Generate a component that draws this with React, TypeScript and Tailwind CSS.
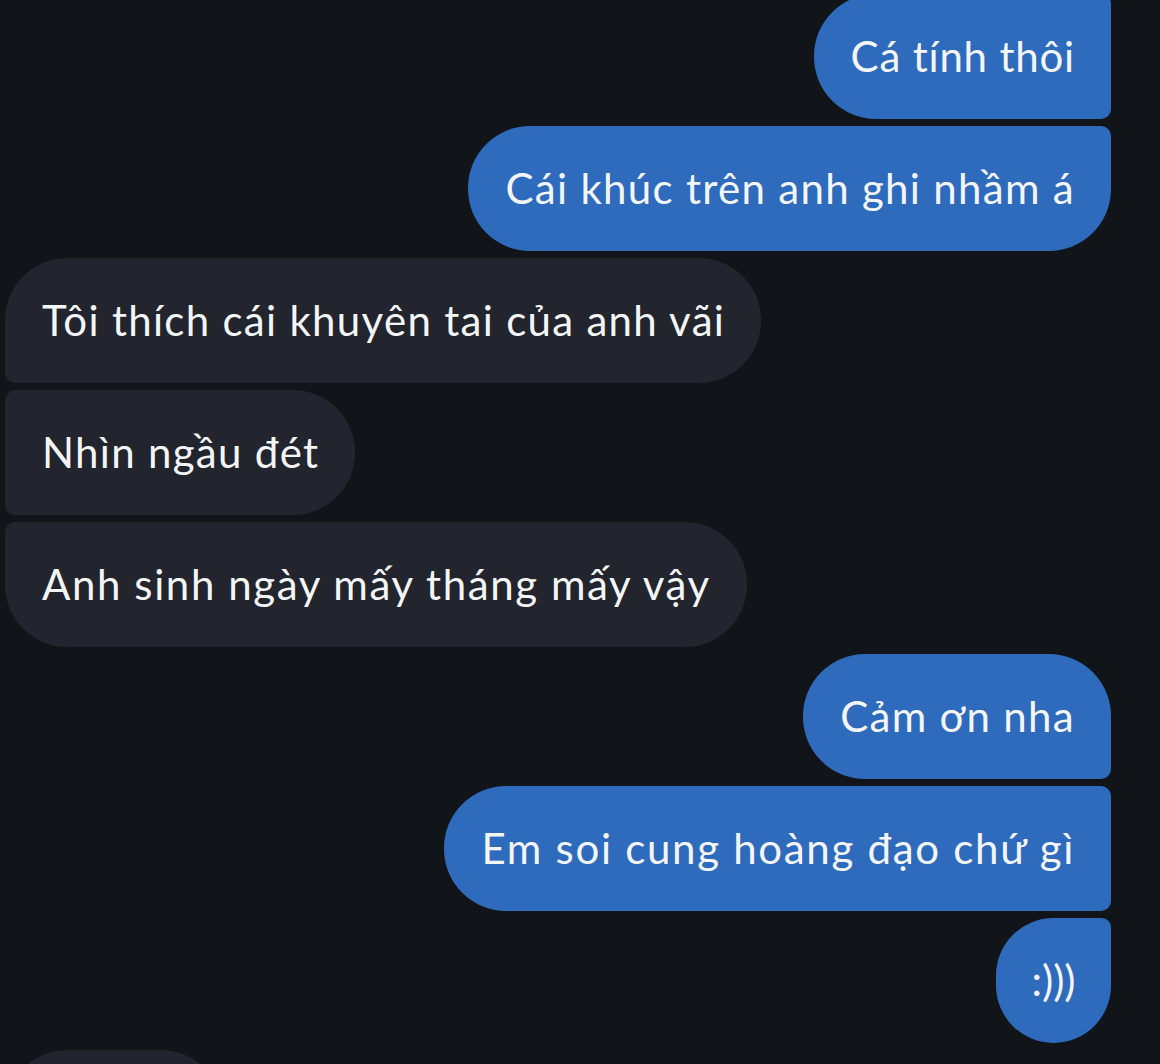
type Msg = {
    text: string;
    mine: boolean;
    shape: string;
    extra?: string;
};

// shape classes: big radius is 62px, small one is 10px
const messages: Msg[] = [
    { text: "Cá tính thôi", mine: true, shape: "rounded-l-[62px] rounded-r-[10px]", extra: "tracking-[0.8px]" },
    { text: "Cái khúc trên anh ghi nhầm á", mine: true, shape: "rounded-l-[62px] rounded-tr-[10px] rounded-br-[62px]" },
    { text: "Tôi thích cái khuyên tai của anh vãi", mine: false, shape: "rounded-tl-[62px] rounded-bl-[10px] rounded-r-[62px]" },
    { text: "Nhìn ngầu đét", mine: false, shape: "rounded-l-[10px] rounded-r-[62px]" },
    { text: "Anh sinh ngày mấy tháng mấy vậy", mine: false, shape: "rounded-tl-[10px] rounded-bl-[62px] rounded-r-[62px]", extra: "tracking-[1.6px]" },
    { text: "Cảm ơn nha", mine: true, shape: "rounded-l-[62px] rounded-tr-[62px] rounded-br-[10px]" },
    { text: "Em soi cung hoàng đạo chứ gì", mine: true, shape: "rounded-l-[62px] rounded-r-[10px]", extra: "tracking-[1.7px]" },
    { text: ":)))", mine: true, shape: "rounded-l-[62px] rounded-tr-[10px] rounded-br-[62px]", extra: "w-[115px] justify-center !px-0 tracking-[0px]" },
];

function Bubble({ msg }: { msg: Msg }) {
    return (
        <div className={msg.mine ? "flex justify-end pr-[49px]" : "flex justify-start pl-[5px]"}>
            <div
                className={
                    "h-[125px] flex items-center pl-[37px] pr-[36px] text-[42px] text-[#f4f5f7] whitespace-nowrap " +
                    (msg.extra ? msg.extra + " " : "tracking-[1.3px] ") +
                    (msg.mine ? "bg-[#2e6bbd] " : "bg-[#22252d] ") +
                    msg.shape
                }
            >
                {msg.text}
            </div>
        </div>
    );
}

export default function App() {
    return (
        <div
            className="w-[1160px] h-[1064px] overflow-hidden bg-[#111418]"
            style={{ fontFamily: '"Lato", "Noto Sans", sans-serif' }}
        >
            <div className="flex flex-col gap-[7px] -mt-[6px]">
                {messages.map((m, i) => (
                    <Bubble key={i} msg={m} />
                ))}
                <div className="flex justify-start pl-[5px]">
                    <div className="h-[125px] w-[218px] bg-[#22252d] rounded-tl-[62px] rounded-bl-[10px] rounded-r-[62px]" />
                </div>
            </div>
        </div>
    );
}
